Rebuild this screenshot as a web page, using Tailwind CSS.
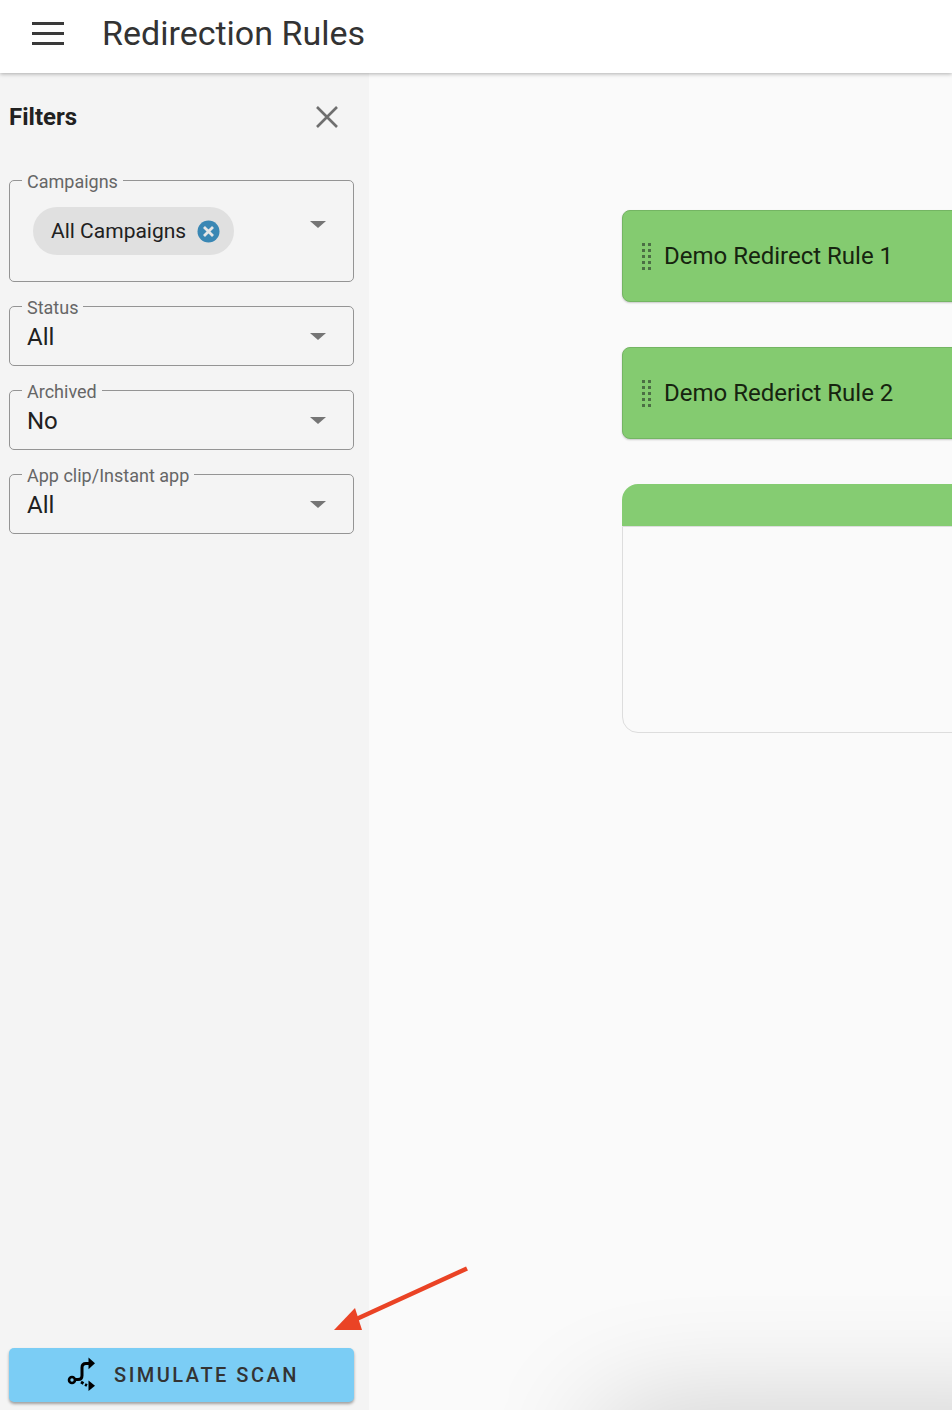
<!DOCTYPE html>
<html lang="en">
<head>
    <meta charset="UTF-8">
    <meta name="viewport" content="width=device-width, initial-scale=1.0">
    <title>Redirection Rules</title>
    <script src="https://cdn.jsdelivr.net/npm/@tailwindcss/browser@4"></script>
</head>
<body class="relative h-[1410px] overflow-hidden bg-[#fafafa] font-[Roboto,sans-serif]">
    <!-- Header -->
    <header class="relative z-10 flex h-[73px] items-center bg-white pb-[7px] shadow-[0_1px_4px_rgba(0,0,0,0.3)]">
        <div class="ml-[32px] flex w-[32px] flex-col gap-[7px]">
            <span class="h-[3px] bg-[#3a3a3a]"></span>
            <span class="h-[3px] bg-[#3a3a3a]"></span>
            <span class="h-[3px] bg-[#3a3a3a]"></span>
        </div>
        <h1 class="ml-[38px] text-[34px] font-normal text-[#333333]">Redirection Rules</h1>
    </header>

    <div class="flex h-[1337px]">
        <!-- Filters -->
        <aside class="flex w-[369px] shrink-0 flex-col bg-[#f4f4f4] pb-[8px] pl-[9px] pr-[15px]">
            <div class="flex h-[88px] items-center justify-between pr-[16px]">
                <h2 class="text-[24px] font-bold text-[#212121]">Filters</h2>
                <svg class="h-[22px] w-[22px]" viewBox="0 0 22 22" fill="none" stroke="#6f6f6f" stroke-width="2.6"><path d="M1 1l20 20M21 1L1 21"/></svg>
            </div>

            <div class="mt-[19px] flex flex-col gap-[24px]">
                <div class="relative flex h-[102px] items-start justify-between rounded-[5px] border border-[#949494] pl-[23px] pr-[27px] pt-[26px]">
                    <label class="absolute left-[12px] top-[-9px] bg-[#f4f4f4] px-[5px] text-[18px] leading-[20px] text-[#666666]">Campaigns</label>
                    <div class="flex h-[48px] w-[201px] items-center rounded-full bg-[#e0e0e0] pl-[18px]">
                        <span class="pt-[1px] text-[21px] text-[#212121]">All Campaigns</span>
                        <svg class="ml-[11px] h-[23px] w-[23px]" viewBox="0 0 23 23"><circle cx="11.5" cy="11.5" r="11" fill="#3a87b4"/><path d="M7 7l9 9M16 7l-9 9" stroke="#e6e6e6" stroke-width="2.8"/></svg>
                    </div>
                    <span class="mt-[14px] h-0 w-0 border-x-[8px] border-t-[7px] border-x-transparent border-t-[#757575]"></span>
                </div>

                <div class="relative flex h-[60px] items-center justify-between rounded-[5px] border border-[#949494] pl-[17px] pr-[27px] pt-[1px]">
                    <label class="absolute left-[12px] top-[-9px] bg-[#f4f4f4] px-[5px] text-[18px] leading-[20px] text-[#666666]">Status</label>
                    <span class="text-[24px] text-[#212121]">All</span>
                    <span class="h-0 w-0 border-x-[8px] border-t-[7px] border-x-transparent border-t-[#757575]"></span>
                </div>

                <div class="relative flex h-[60px] items-center justify-between rounded-[5px] border border-[#949494] pl-[17px] pr-[27px] pt-[1px]">
                    <label class="absolute left-[12px] top-[-9px] bg-[#f4f4f4] px-[5px] text-[18px] leading-[20px] text-[#666666]">Archived</label>
                    <span class="text-[24px] text-[#212121]">No</span>
                    <span class="h-0 w-0 border-x-[8px] border-t-[7px] border-x-transparent border-t-[#757575]"></span>
                </div>

                <div class="relative flex h-[60px] items-center justify-between rounded-[5px] border border-[#949494] pl-[17px] pr-[27px] pt-[1px]">
                    <label class="absolute left-[12px] top-[-9px] bg-[#f4f4f4] px-[5px] text-[18px] leading-[20px] text-[#666666]">App clip/Instant app</label>
                    <span class="text-[24px] text-[#212121]">All</span>
                    <span class="h-0 w-0 border-x-[8px] border-t-[7px] border-x-transparent border-t-[#757575]"></span>
                </div>
            </div>

            <button class="mt-auto flex h-[54px] items-center justify-center gap-[17px] rounded-[5px] bg-[#7bcdf5] pl-[3px] shadow-[0_2px_3px_rgba(0,0,0,0.35)]">
                <svg class="h-[36px] w-[30px]" viewBox="67 1357 30 36" fill="none" stroke="#000000">
                    <circle cx="72" cy="1380" r="3" stroke-width="2.6"/>
                    <path d="M75 1379.500h3q4 0 4-4v-8q0-4 4-4h3" stroke-width="3"/>
                    <path d="M88.500 1357.500l6.500 5.700-6.500 6z" fill="#000000" stroke="none"/>
                    <path d="M81 1382l2.500 1.500M85 1384.500l2 1" stroke-width="2.800"/>
                    <path d="M88.500 1380.500l6.500 5.200-6.500 5.200z" fill="#000000" stroke="none"/>
                </svg>
                <span class="text-[20px] font-medium tracking-[2.5px] text-[#333333]">SIMULATE SCAN</span>
            </button>
        </aside>

        <!-- Rules -->
        <main class="flex min-w-0 flex-1 flex-col gap-[45px] overflow-hidden pl-[253px] pt-[137px]">
            <div class="flex h-[92px] w-[500px] shrink-0 items-center gap-[13px] rounded-[8px] border border-[#74b563] bg-[#84cb70] pl-[19px] shadow-[0_1px_2px_rgba(0,0,0,0.2)]">
                <div class="grid grid-cols-[3px_3px] gap-[3px]">
                    <span class="h-[3px] bg-[#4b6f44]"></span><span class="h-[3px] bg-[#4b6f44]"></span>
                    <span class="h-[3px] bg-[#4b6f44]"></span><span class="h-[3px] bg-[#4b6f44]"></span>
                    <span class="h-[3px] bg-[#4b6f44]"></span><span class="h-[3px] bg-[#4b6f44]"></span>
                    <span class="h-[3px] bg-[#4b6f44]"></span><span class="h-[3px] bg-[#4b6f44]"></span>
                    <span class="h-[3px] bg-[#4b6f44]"></span><span class="h-[3px] bg-[#4b6f44]"></span>
                </div>
                <span class="text-[24px] text-[#16240f]">Demo Redirect Rule 1</span>
            </div>

            <div class="flex h-[92px] w-[500px] shrink-0 items-center gap-[13px] rounded-[8px] border border-[#74b563] bg-[#84cb70] pl-[19px] shadow-[0_1px_2px_rgba(0,0,0,0.2)]">
                <div class="grid grid-cols-[3px_3px] gap-[3px]">
                    <span class="h-[3px] bg-[#4b6f44]"></span><span class="h-[3px] bg-[#4b6f44]"></span>
                    <span class="h-[3px] bg-[#4b6f44]"></span><span class="h-[3px] bg-[#4b6f44]"></span>
                    <span class="h-[3px] bg-[#4b6f44]"></span><span class="h-[3px] bg-[#4b6f44]"></span>
                    <span class="h-[3px] bg-[#4b6f44]"></span><span class="h-[3px] bg-[#4b6f44]"></span>
                    <span class="h-[3px] bg-[#4b6f44]"></span><span class="h-[3px] bg-[#4b6f44]"></span>
                </div>
                <span class="text-[24px] text-[#16240f]">Demo Rederict Rule 2</span>
            </div>

            <div class="w-[500px] shrink-0">
                <div class="h-[42px] rounded-t-[16px] bg-[#85cc72]"></div>
                <div class="h-[207px] rounded-b-[16px] border border-[#dddddd]"></div>
            </div>
        </main>
    </div>

    <!-- Shadow coming up from below the window -->
    <div class="absolute left-[595px] top-[1412px] h-[100px] w-[500px] rounded-[40px] shadow-[0_0_120px_rgba(0,0,0,0.2)]"></div>

    <!-- Annotation arrow -->
    <svg class="absolute left-[330px] top-[1262px] h-[72px] w-[142px]" viewBox="330 1262 142 72">
        <path d="M467 1268.500L350 1322" stroke="#ea4325" stroke-width="4.500" fill="none"/>
        <path d="M334 1330l21-22 7 22z" fill="#ea4325"/>
    </svg>
</body>
</html>
